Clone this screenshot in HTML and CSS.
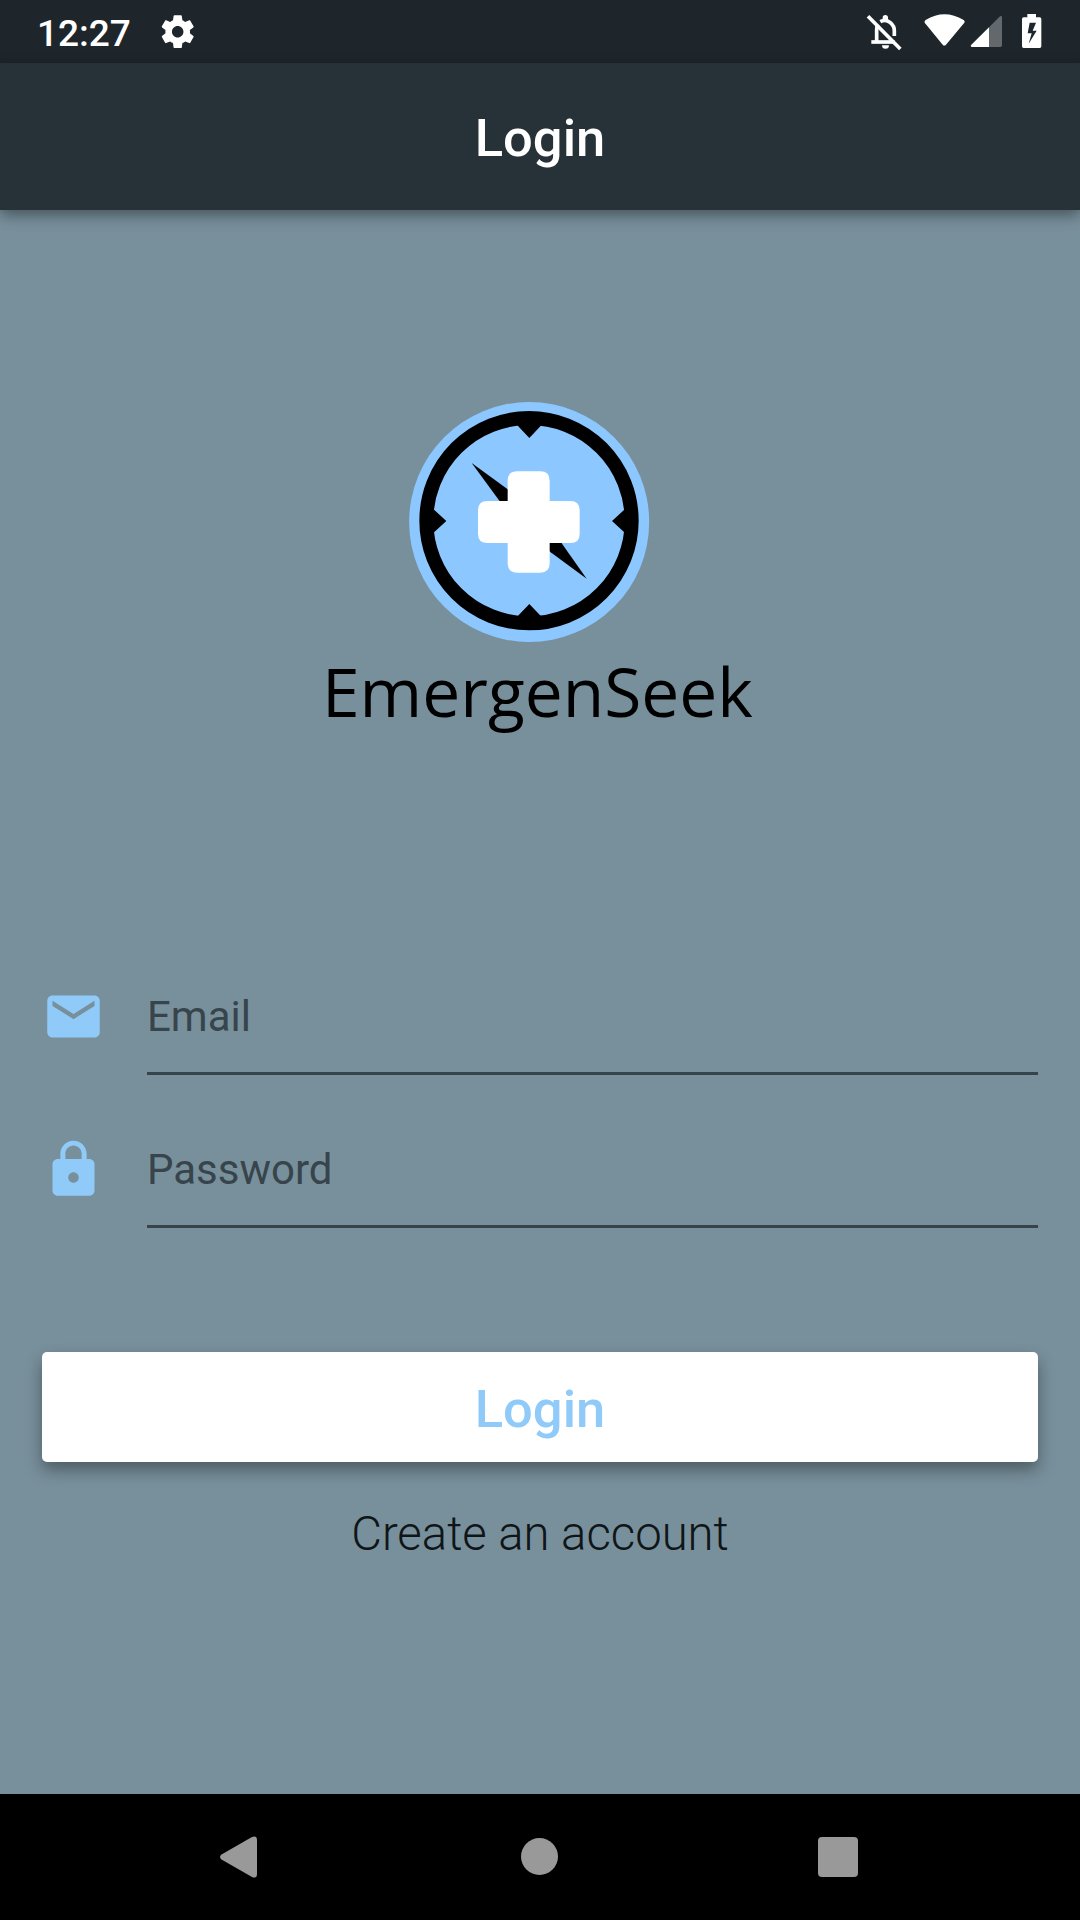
FILE: index.html
```html
<!DOCTYPE html>
<html lang="en">
<head>
<meta charset="utf-8">
<title>Login</title>
<link rel="stylesheet" href="styles.css">
</head>
<body>
<div class="screen">
  <div class="status-bar">
    <span class="clock">12:27</span>
    <svg class="gear" viewBox="0 0 24 24"><path fill="#fff" d="M19.43 12.98c.04-.32.07-.64.07-.98s-.03-.66-.07-.98l2.11-1.65c.19-.15.24-.42.12-.64l-2-3.46c-.12-.22-.39-.3-.61-.22l-2.49 1c-.52-.4-1.08-.73-1.69-.98l-.38-2.65C14.46 2.18 14.25 2 14 2h-4c-.25 0-.46.18-.49.42l-.38 2.65c-.61.25-1.17.59-1.69.98l-2.49-1c-.23-.09-.49 0-.61.22l-2 3.46c-.13.22-.07.49.12.64l2.11 1.65c-.04.32-.07.65-.07.98s.03.66.07.98l-2.11 1.65c-.19.15-.24.42-.12.64l2 3.46c.12.22.39.3.61.22l2.49-1c.52.4 1.08.73 1.69.98l.38 2.65c.03.24.24.42.49.42h4c.25 0 .46-.18.49-.42l.38-2.65c.61-.25 1.17-.59 1.69-.98l2.49 1c.23.09.49 0 .61-.22l2-3.46c.12-.22.07-.49-.12-.64l-2.11-1.65zM12 15.5c-1.93 0-3.5-1.57-3.5-3.5s1.57-3.5 3.5-3.5 3.5 1.57 3.5 3.5-1.57 3.5-3.5 3.5z"/></svg>
    <svg class="indicators" viewBox="0 0 720 189">
      <g fill="none" stroke="#fff" stroke-width="11">
        <path d="M94 126H164"/>
        <path d="M110 124V88Q110 78 114 73"/>
        <path d="M121 65Q137 56 151 68Q163 78 163 92V108"/>
        <path d="M84 49L181 147"/>
      </g>
      <path fill="#fff" d="M128 60V53a8 8 0 0 1 16 0V60ZM126 136H147a10.500 10.500 0 0 1-21 0Z"/>
      <path fill="#fff" d="M254 68Q252 63 257 60Q313 26 371 60Q376 63 373 68L318 134Q313 139 308 134Z"/>
      <path fill="#62686c" d="M447 82L480 49Q486 46 486 52V136Q486 141 481 141H447Z"/>
      <path fill="#fff" d="M447 82V141H396Q390 139 394 134Z"/>
      <path fill="#fff" fill-rule="evenodd" d="M562 42H588V52H599Q604 52 604 57V139Q604 144 599 144H551Q546 144 546 139V57Q546 52 551 52H562ZM569 68L563 100H575L566 131L590 92H578L588 68Z"/>
    </svg>
  </div>
  <header class="app-bar"><h1>Login</h1></header>
  <main class="content">
    <div class="brand">
      <svg class="logo" viewBox="0 0 840 780">
        <circle cx="417.500" cy="396" r="360" fill="#8cc8ff"/>
        <circle cx="417" cy="392" r="308" fill="none" stroke="#000" stroke-width="42"/>
        <path d="M372 95L418 144L464 95ZM372 690L418 642L464 690ZM120 348L169 393L120 438ZM715 348L666 393L715 438Z"/>
        <path d="M245 219L352 297L460 400L515 460L590 566L482 487L350 362Z"/>
        <path fill="#fff" d="M353 272Q353 244 381 244H451Q479 244 479 272V333H541Q569 333 569 361V431Q569 459 541 459H479V520Q479 548 451 548H381Q353 548 353 520V459H292Q264 459 264 431V361Q264 333 292 333H353Z"/>
      </svg>
      <div class="brand-name">EmergenSeek</div>
    </div>
    <form class="form">
      <label class="field">
        <svg viewBox="0 0 24 24"><path fill="#90caf9" d="M20 4H4c-1.100 0-1.990.9-1.990 2L2 18c0 1.100.9 2 2 2h16c1.100 0 2-.9 2-2V6c0-1.100-.9-2-2-2zm0 4l-8 5-8-5V6l8 5 8-5v2z"/></svg>
        <span class="input">Email</span>
      </label>
      <label class="field">
        <svg viewBox="0 0 24 24"><path fill="#90caf9" d="M18 8h-1V6c0-2.760-2.240-5-5-5S7 3.240 7 6v2H6c-1.100 0-2 .9-2 2v10c0 1.100.9 2 2 2h12c1.100 0 2-.9 2-2V10c0-1.100-.9-2-2-2zm-6 9c-1.100 0-2-.9-2-2s.9-2 2-2 2 .9 2 2-.9 2-2 2zm3.100-9H8.900V6c0-1.710 1.390-3.100 3.100-3.100 1.710 0 3.100 1.390 3.100 3.100v2z"/></svg>
        <span class="input">Password</span>
      </label>
      <button class="submit" type="button">Login</button>
      <a class="create">Create an account</a>
    </form>
  </main>
  <nav class="nav-bar">
    <svg viewBox="0 0 1080 126">
      <g fill="#999">
        <path d="M221.500 60.500L252 43Q257 41 257 46V80Q257 85 252 83L221.500 65.500Q218.500 63 221.500 60.500Z"/>
        <circle cx="539.500" cy="62.500" r="18.500"/>
        <rect x="818" y="43" width="40" height="40" rx="4"/>
      </g>
    </svg>
  </nav>
</div>
</body>
</html>
```
FILE: styles.css
```css
* { box-sizing: border-box; }
body { margin: 0; font-family: Roboto, sans-serif; }
svg { display: block; flex: none; }

.screen {
  width: 1080px;
  height: 1920px;
  display: flex;
  flex-direction: column;
  background: #78909c;
  overflow: hidden;
}

.status-bar {
  height: 63px;
  flex: none;
  display: flex;
  background: #1e262b;
  color: #fff;
}
.clock {
  width: 121px;
  margin-left: 37px;
  padding-top: 3px;
  font-size: 37px;
  font-weight: 500;
  line-height: 61px;
}
.gear { width: 39.400px; height: 39.400px; margin-top: 12px; }
.indicators { width: 240px; height: 63px; margin-left: auto; }

.app-bar {
  height: 147px;
  flex: none;
  z-index: 1;
  background: #263238;
  box-shadow: 0 5px 14px rgba(0, 0, 0, .42);
  color: #fff;
  text-align: center;
}
.app-bar h1 {
  margin: 0;
  padding: 3px 0 0;
  font-size: 52.500px;
  font-weight: 500;
  line-height: 144px;
}

.content {
  flex: 1;
  display: flex;
  flex-direction: column;
  padding: 180px 42px 0;
}
.brand { height: 595px; flex: none; }
.logo { width: 280px; height: 260px; margin-left: 348px; }
.brand-name {
  margin-left: 280px;
  font-family: "Open Sans", sans-serif;
  font-size: 67.700px;
  line-height: 82px;
  white-space: nowrap;
  color: #000;
  filter: blur(.6px);
}

.form { display: flex; flex-direction: column; }
.field {
  display: flex;
  align-items: flex-start;
  gap: 42px;
  height: 153px;
}
.field svg { width: 63px; height: 63px; }
.input {
  flex: 1;
  height: 90px;
  border-bottom: 3px solid #37444b;
  color: #37444b;
  font-size: 42px;
  line-height: 63px;
}
.submit {
  height: 110px;
  margin-top: 61px;
  padding: 4px 0 0;
  border: 0;
  border-radius: 5px;
  background: #fff;
  box-shadow: 0 8px 16px rgba(0, 0, 0, .36);
  color: #90caf9;
  font: 500 52.500px/106px Roboto, sans-serif;
}
.create {
  margin-top: 36px;
  text-align: center;
  color: #101517;
  font-size: 47.250px;
  font-weight: 300;
  line-height: 72px;
}

.nav-bar { height: 126px; flex: none; background: #000; }
.nav-bar svg { width: 1080px; height: 126px; }
```
